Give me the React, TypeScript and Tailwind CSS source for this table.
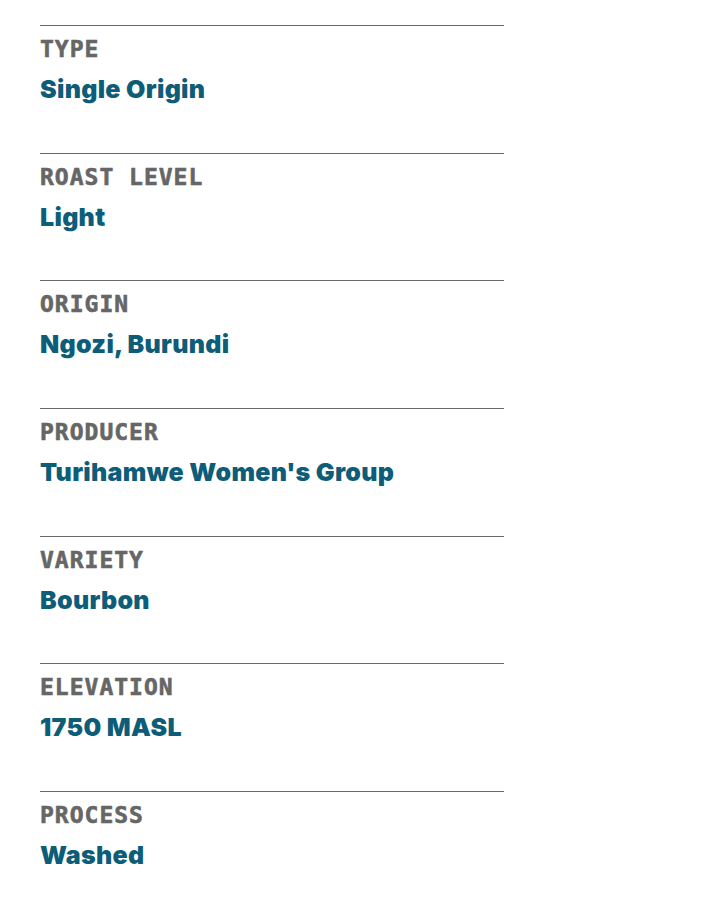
import React from "react";

const items: [string, string][] = [
  ["TYPE", "Single Origin"],
  ["ROAST LEVEL", "Light"],
  ["ORIGIN", "Ngozi, Burundi"],
  ["PRODUCER", "Turihamwe Women's Group"],
  ["VARIETY", "Bourbon"],
  ["ELEVATION", "1750 MASL"],
  ["PROCESS", "Washed"],
];

export default function App() {
  return (
    <div className="w-[724px] h-[918px] bg-white pt-[25px] pl-[40px]">
      {items.map(([label, value]) => (
        <div key={label} className="w-[464px] h-[127.67px] border-t border-[#6b6b6b]">
          <div
            className="mt-[9px] text-[23px] leading-[28px] font-bold text-[#666666] tracking-[1px]"
            style={{ fontFamily: '"DejaVu Sans Mono", monospace', WebkitTextStroke: "0.6px #666666" }}
          >
            {label}
          </div>
          <div
            className="mt-[11px] text-[25px] leading-[30px] font-black text-[#0d5d79] tracking-[0.3px]"
            style={{ fontFamily: 'Inter, "Noto Sans", sans-serif' }}
          >
            {value}
          </div>
        </div>
      ))}
    </div>
  );
}
